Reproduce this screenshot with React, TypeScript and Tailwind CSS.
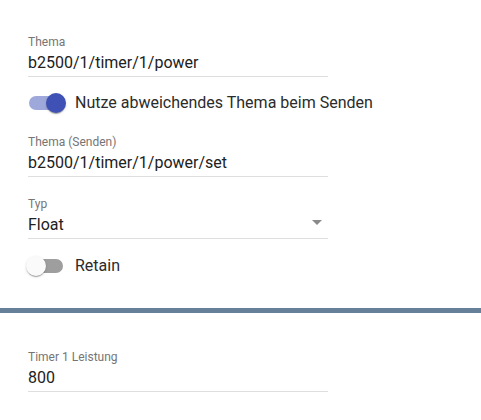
import React from "react";

function Field({
  label,
  value,
  select,
  className = "",
}: {
  label: string;
  value: string;
  select?: boolean;
  className?: string;
}) {
  return (
    <div className={`w-[300px] ${className}`}>
      <div className="h-[16px] text-[12px] leading-[16px] text-[#757575]">{label}</div>
      <div className="relative mt-[1px] pb-px border-b border-[#dedede]">
        <div className="h-[24px] text-[16px] leading-[24px] text-[#212121]">{value}</div>
        {select && (
          <svg
            className="absolute right-[-1px] top-[-3px]"
            width="24"
            height="24"
            viewBox="0 0 24 24"
          >
            <path d="M7 10l5 5 5-5z" fill="#8a8a8a" />
          </svg>
        )}
      </div>
    </div>
  );
}

function SwitchRow({
  checked,
  label,
  className = "",
}: {
  checked?: boolean;
  label: string;
  className?: string;
}) {
  return (
    <div className={`flex items-center h-[38px] ml-[-11px] ${className}`}>
      <div className="relative w-[58px] h-[38px] shrink-0">
        <div
          className={`absolute left-[12px] top-[12px] w-[34px] h-[14px] rounded-full ${
            checked ? "bg-[#9fa8da]" : "bg-[#9e9e9e]"
          }`}
        />
        <div
          className={`absolute top-[9px] w-[20px] h-[20px] rounded-full shadow-[0_2px_1px_-1px_rgba(0,0,0,0.2),0_1px_1px_0_rgba(0,0,0,0.14),0_1px_3px_0_rgba(0,0,0,0.12)] ${
            checked ? "left-[29px] bg-[#3f51b5]" : "left-[9px] bg-[#fafafa]"
          }`}
        />
      </div>
      <span className="text-[16px] leading-[24px] text-[#2b2b2b]">{label}</span>
    </div>
  );
}

export default function App() {
  return (
    <div className="w-[481px] h-[420px] bg-white overflow-hidden font-['Roboto',sans-serif]">
      <div className="pl-[28px] pt-[34px]">
        <Field label="Thema" value="b2500/1/timer/1/power" />
        <SwitchRow checked label="Nutze abweichendes Thema beim Senden" className="mt-[7px]" />
        <Field label="Thema (Senden)" value="b2500/1/timer/1/power/set" className="mt-[12px]" />
        <Field label="Typ" value="Float" select className="mt-[19px]" />
        <SwitchRow label="Retain" className="mt-[8px]" />
      </div>
      <div className="mt-[23px] h-[5px] bg-[#67809a]" />
      <div className="pl-[28px] pt-[36px]">
        <Field label="Timer 1 Leistung" value="800" />
      </div>
    </div>
  );
}
